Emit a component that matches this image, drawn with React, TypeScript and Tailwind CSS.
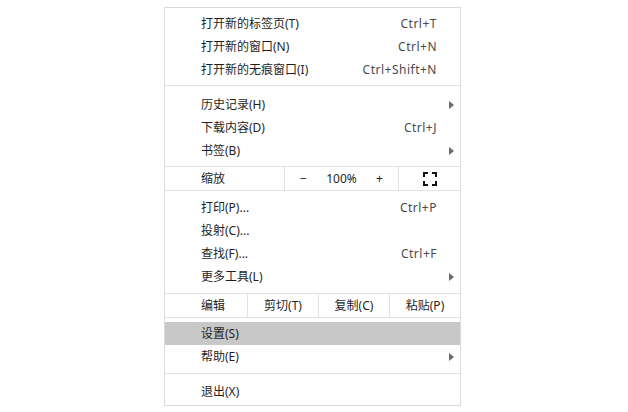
import React from "react";

type Item = {
  label: string;
  shortcut?: string;
  submenu?: boolean;
  active?: boolean;
};

const FONT = "font-['Noto_Sans','Noto_Sans_CJK_SC',sans-serif]";

function Arrow() {
  return (
    <svg width="5" height="8" viewBox="0 0 5 8" className="shrink-0">
      <path d="M0 0 L5 4 L0 8 Z" fill="#6b6b6b" />
    </svg>
  );
}

function Row({ item }: { item: Item }) {
  return (
    <div
      className={`flex h-[23px] items-center justify-between pl-[36px] ${
        item.submenu ? "pr-[6px]" : "pr-[23px]"
      } ${item.active ? "bg-[#c8c8c8]" : ""}`}
    >
      <span className="text-[#1f1f1f]">{item.label}</span>
      {item.shortcut ? (
        <span className="tracking-[0.5px] text-[#4a4a4a]">{item.shortcut}</span>
      ) : null}
      {item.submenu ? <Arrow /> : null}
    </div>
  );
}

function FullscreenIcon() {
  return (
    <svg width="14" height="14" viewBox="0 0 14 14">
      <path
        d="M1 5 V1 H5 M9 1 H13 V5 M13 9 V13 H9 M5 13 H1 V9"
        fill="none"
        stroke="#111"
        strokeWidth="2"
      />
    </svg>
  );
}

const groupOne: Item[] = [
  { label: "打开新的标签页(T)", shortcut: "Ctrl+T" },
  { label: "打开新的窗口(N)", shortcut: "Ctrl+N" },
  { label: "打开新的无痕窗口(I)", shortcut: "Ctrl+Shift+N" },
];

const groupTwo: Item[] = [
  { label: "历史记录(H)", submenu: true },
  { label: "下载内容(D)", shortcut: "Ctrl+J" },
  { label: "书签(B)", submenu: true },
];

const groupThree: Item[] = [
  { label: "打印(P)...", shortcut: "Ctrl+P" },
  { label: "投射(C)..." },
  { label: "查找(F)...", shortcut: "Ctrl+F" },
  { label: "更多工具(L)", submenu: true },
];

const groupFour: Item[] = [
  { label: "设置(S)", active: true },
  { label: "帮助(E)", submenu: true },
];

export default function App() {
  return (
    <div className={`min-h-screen bg-white pl-[164px] pt-[7px] text-[12px] ${FONT}`}>
      <div className="w-[297px] border border-[#dadada] bg-white">
        <div className="pb-[4px] pt-[4px]">
          {groupOne.map((item) => (
            <Row key={item.label} item={item} />
          ))}
        </div>
        <div className="h-px bg-[#e2e2e2]" />
        <div className="pb-[4px] pt-[7px]">
          {groupTwo.map((item) => (
            <Row key={item.label} item={item} />
          ))}
        </div>

        <div className="flex h-[25px] border-y border-[#e2e2e2]">
          <div className="flex w-[119px] items-center pl-[36px] text-[#1f1f1f]">缩放</div>
          <div className="flex w-[114px] items-center justify-between border-l border-[#e2e2e2] pl-[15px] pr-[15px] text-[#1f1f1f]">
            <span>−</span>
            <span>100%</span>
            <span>+</span>
          </div>
          <div className="flex flex-1 items-center justify-center border-l border-[#e2e2e2]">
            <FullscreenIcon />
          </div>
        </div>

        <div className="pb-[5px] pt-[5px]">
          {groupThree.map((item) => (
            <Row key={item.label} item={item} />
          ))}
        </div>

        <div className="flex h-[25px] border-y border-[#e2e2e2] text-[#1f1f1f]">
          <div className="flex w-[82px] items-center pl-[36px]">编辑</div>
          <div className="flex w-[71px] items-center justify-center border-l border-[#e2e2e2]">剪切(T)</div>
          <div className="flex w-[71px] items-center justify-center border-l border-[#e2e2e2]">复制(C)</div>
          <div className="flex flex-1 items-center justify-center border-l border-[#e2e2e2]">粘贴(P)</div>
        </div>

        <div className="pb-[5px] pt-[4px]">
          {groupFour.map((item) => (
            <Row key={item.label} item={item} />
          ))}
        </div>
        <div className="h-px bg-[#e2e2e2]" />
        <div className="pb-[2px] pt-[6px]">
          <Row item={{ label: "退出(X)" }} />
        </div>
      </div>
    </div>
  );
}
